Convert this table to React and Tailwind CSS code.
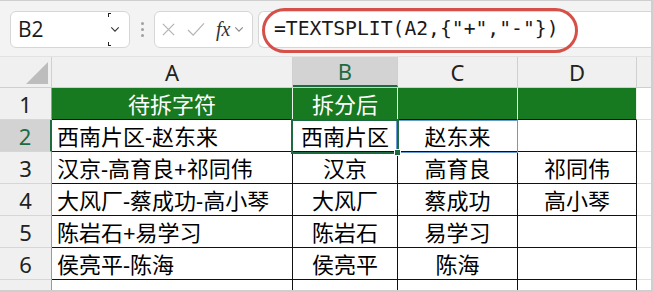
import React from "react";

const CJK = { fontFamily: '"Noto Sans", "Noto Sans CJK SC", sans-serif' };

const rows = [
  ["待拆字符", "拆分后", "", ""],
  ["西南片区-赵东来", "西南片区", "赵东来", ""],
  ["汉京-高育良+祁同伟", "汉京", "高育良", "祁同伟"],
  ["大风厂-蔡成功-高小琴", "大风厂", "蔡成功", "高小琴"],
  ["陈岩石+易学习", "陈岩石", "易学习", ""],
  ["侯亮平-陈海", "侯亮平", "陈海", ""],
  ["", "", "", ""],
];

const widths = ["w-[241px]", "w-[105px]", "w-[120px]", "w-[119px]"];

function Chevron({ className }) {
  return (
    <svg viewBox="0 0 12 8" className={className} fill="none" stroke="currentColor" strokeWidth="1.3">
      <path d="M1.5 1.5 L6 6 L10.5 1.5" />
    </svg>
  );
}

export default function App() {
  return (
    <div
      className="relative w-[653px] h-[292px] overflow-hidden bg-white border-t border-r-2 border-b-2 border-[#cfcfcf] text-black"
      style={CJK}
    >
      {/* Toolbar */}
      <div className="h-[55px] bg-[#f3f3f3] flex items-center pt-[1px]">
        <div className="relative ml-[10px] w-[120px] h-[37px] bg-white border border-[#d6d6d6] rounded-[6px] flex items-center justify-between pl-[7px] pr-[9px]">
          <span className="text-[21px] leading-none text-[#1a1a1a]" style={{ fontFamily: '"Open Sans", sans-serif' }}>B2</span>
          <Chevron className="w-[10px] h-[7px] text-[#333]" />
          <div className="absolute left-[97px] top-[1px] w-[3px] h-[4px] border-l border-t border-[#222]" />
          <div className="absolute left-[97px] bottom-[1px] w-[3px] h-[4px] border-l border-b border-[#222]" />
        </div>
        <div className="ml-[11px] w-[3px] flex flex-col gap-[3px]">
          <div className="w-[3px] h-[3px] rounded-full bg-[#a0a0a0]" />
          <div className="w-[3px] h-[3px] rounded-full bg-[#a0a0a0]" />
          <div className="w-[3px] h-[3px] rounded-full bg-[#a0a0a0]" />
        </div>
        <div className="ml-[10px] w-[99px] h-[37px] bg-white border border-[#d6d6d6] rounded-[6px] flex items-center pl-[6px]">
          <svg viewBox="0 0 16 16" className="w-[15px] h-[15px]" fill="none" stroke="#b5b5b5" strokeWidth="1.4">
            <path d="M2 2 L14 14 M14 2 L2 14" />
          </svg>
          <svg viewBox="0 0 20 16" className="ml-[10px] w-[20px] h-[15px]" fill="none" stroke="#b5b5b5" strokeWidth="1.4">
            <path d="M1.5 8.5 L7 14 L18.5 1.5" />
          </svg>
          <span className="ml-[10px] text-[20px] italic leading-none text-[#333]" style={{ fontFamily: '"Liberation Serif", serif' }}>fx</span>
          <Chevron className="ml-[4px] w-[10px] h-[7px] text-[#888]" />
        </div>
        <div className="ml-[5px] flex-1 h-[37px] bg-white border border-r-0 border-[#d6d6d6] rounded-l-[6px] flex items-center pl-[15px]">
          <span className="text-[19.7px] leading-none text-[#1a1a1a]" style={{ fontFamily: '"DejaVu Sans Mono", monospace' }}>
            =TEXTSPLIT(A2,{"{"}"+","-"{"}"})
          </span>
        </div>
      </div>

      {/* Red annotation */}
      <div className="absolute left-[262px] top-[7px] w-[316px] h-[45px] rounded-full border-[3px] border-[#d6504a] pointer-events-none" />

      {/* Column headers */}
      <div className="flex h-[32px] bg-[#f0f0f0] border-t border-[#e2e2e2] border-b border-b-[#cfcfcf] text-[22px] leading-none" style={{ fontFamily: '"Noto Sans", sans-serif' }}>
        <div className="relative w-[52px] border-r border-[#d0d0d0]">
          <svg viewBox="0 0 22 22" className="absolute right-[3px] bottom-[3px] w-[22px] h-[22px]">
            <path d="M22 0 L22 22 L0 22 Z" fill="#bdbdbd" />
          </svg>
        </div>
        <div className="w-[241px] border-r border-[#d0d0d0] flex items-center justify-center text-[#222]">A</div>
        <div className="w-[105px] border-r border-[#d0d0d0] bg-[#d3d3d3] flex items-center justify-center text-[#1e6b41] border-b-2 border-b-[#1e6b41]">B</div>
        <div className="w-[120px] border-r border-[#d0d0d0] flex items-center justify-center text-[#222]">C</div>
        <div className="w-[119px] border-r border-[#d0d0d0] flex items-center justify-center text-[#222]">D</div>
        <div className="flex-1" />
      </div>

      {/* Rows */}
      {rows.map((r, i) => {
        const green = i === 0;
        const sel = i === 1;
        return (
          <div key={i} className="flex h-[32px]">
            <div
              className={
                "w-[52px] flex items-center justify-center text-[22px] leading-none border-b border-[#d6d6d6] " +
                (sel
                  ? "bg-[#d3d3d3] text-[#1e6b41] border-r-2 border-r-[#1e6b41]"
                  : "bg-[#f0f0f0] text-[#222] border-r border-r-[#9a9a9a]")
              }
              style={{ fontFamily: '"Noto Sans", sans-serif' }}
            >
              {i < 6 ? <span>{i + 1}</span> : null}
            </div>
            {r.map((t, j) => (
              <div
                key={j}
                className={
                  widths[j] +
                  " flex items-center text-[22px] leading-none whitespace-nowrap " +
                  (j === 0 && !green ? "justify-start pl-[5px] " : "justify-center ") +
                  (green
                    ? "bg-[#177a21] text-white border-r border-r-[#e8f2e8] border-b border-b-[#111]"
                    : "border-r border-b border-[#111]")
                }
              >
                {t}
              </div>
            ))}
            <div className="flex-1 border-b border-[#e0e0e0]" />
          </div>
        );
      })}

      {/* Spill range outline C2 */}
      <div className="absolute left-[396px] top-[119px] w-[122px] h-[33px] border border-[#6b98d6] pointer-events-none" />
      {/* Active cell B2 */}
      <div className="absolute left-[291px] top-[118px] w-[108px] h-[35px] border-2 border-[#1e6b41] pointer-events-none" />
      {/* Fill handle */}
      <div className="absolute left-[394px] top-[148px] w-[7px] h-[7px] bg-[#1e6b41] border border-white pointer-events-none" />
    </div>
  );
}
